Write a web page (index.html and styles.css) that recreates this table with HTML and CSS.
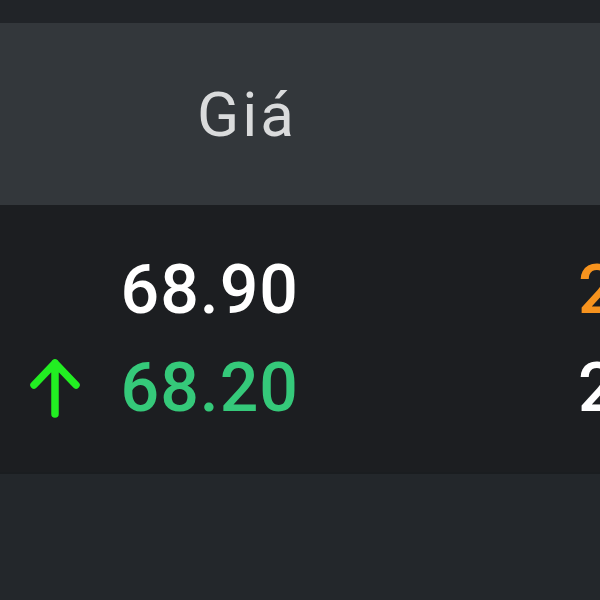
FILE: index.html
```html
<!DOCTYPE html>
<html lang="vi">
<head>
  <meta charset="UTF-8" />
  <meta name="viewport" content="width=device-width, initial-scale=1.0"/>
  <title>Bảng giá</title>
  <link rel="stylesheet" href="styles.css">
</head>
<body>

<div class="top-bar"></div>

<!-- Price table -->
<div class="price-table">
  <div class="table-head">
    <div class="cell"></div>
    <div class="cell cell-price head-price">Giá</div>
    <div class="cell cell-volume"></div>
  </div>

  <div class="table-body">
    <div class="table-row">
      <div class="cell cell-icon"></div>
      <div class="cell cell-price">68.90</div>
      <div class="cell cell-volume vol-orange">2,500</div>
    </div>
    <div class="table-row row-up">
      <div class="cell cell-icon">
        <svg width="52" height="62" viewBox="0 0 52 62">
          <path d="M26 57 V6 M5 28 L26 6 L47 28" fill="none" stroke="#22ee22" stroke-width="7.5" stroke-linecap="round" stroke-linejoin="round"/>
        </svg>
      </div>
      <div class="cell cell-price">68.20</div>
      <div class="cell cell-volume">2,100</div>
    </div>
  </div>
</div>

</body>
</html>
```

FILE: styles.css
```css
/* Global Styling */
body {
  font-family: Roboto, "Noto Sans", sans-serif;
  margin: 0;
  padding: 0;
  background: #23272b;
  color: #fff;
  overflow: hidden;
}

.top-bar {
  height: 23px;
  background: #212428;
}

/* Table Styling */
.table-head,
.table-row {
  display: grid;
  grid-template-columns: 110px 189px 1fr;
  align-items: center;
}

.table-head {
  height: 182px;
  background: #33373b;
  color: #dadbdc;
  font-size: 62px;
  letter-spacing: 3px;
}

.head-price {
  padding-right: 2px;
}

.table-body {
  background: #1c1e21;
  padding: 36px 0 35px;
  border-bottom: 2px solid #1a1d20;
}

.table-row {
  height: 98px;
  font-size: 68px;
  font-weight: 500;
  letter-spacing: 1px;
}

.cell {
  white-space: nowrap;
  overflow: hidden;
}

.cell-icon {
  display: flex;
  justify-content: center;
  letter-spacing: 0;
}

.cell-price {
  text-align: right;
}

.cell-volume {
  padding-left: 279px;
}

.vol-orange {
  color: #f7931e;
}

.row-up .cell-price {
  color: #35c97a;
}
```
